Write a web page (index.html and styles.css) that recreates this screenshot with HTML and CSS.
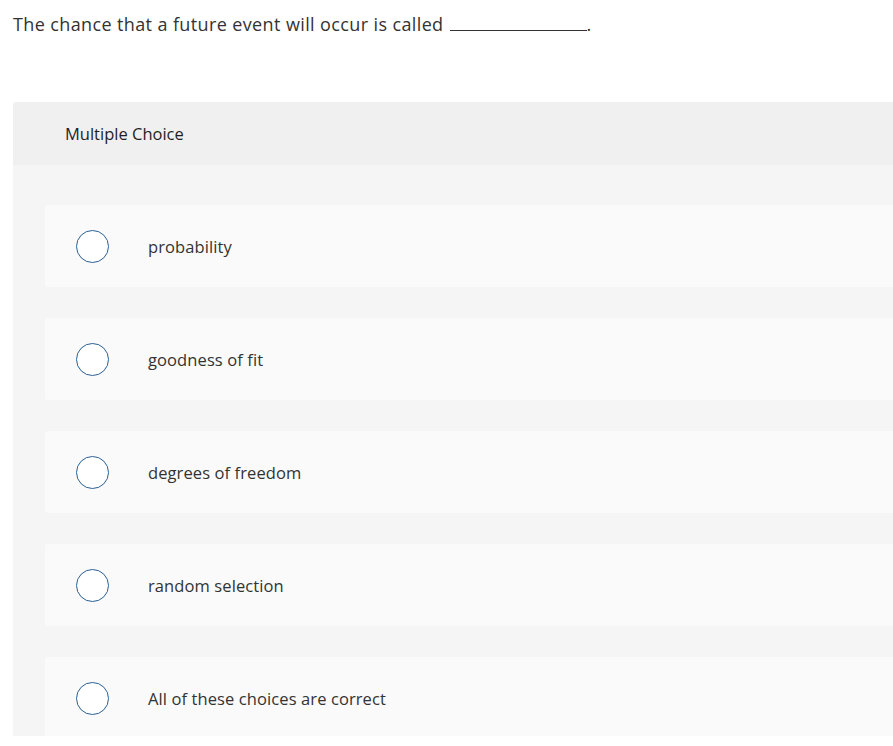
FILE: index.html
```html
<!DOCTYPE html>
<html>
<head>
<meta charset="utf-8">
<link rel="stylesheet" href="styles.css">
</head>
<body>
<div class="page">
  <p class="question">The chance that a future event will occur is called <span class="blank"></span>.</p>
  <section class="panel">
    <header class="panel-head">Multiple Choice</header>
    <div class="panel-body">
      <label class="choice"><span class="radio"></span><span class="label">probability</span></label>
      <label class="choice"><span class="radio"></span><span class="label">goodness of fit</span></label>
      <label class="choice"><span class="radio"></span><span class="label">degrees of freedom</span></label>
      <label class="choice"><span class="radio"></span><span class="label">random selection</span></label>
      <label class="choice"><span class="radio"></span><span class="label">All of these choices are correct</span></label>
    </div>
  </section>
</div>
</body>
</html>
```
FILE: styles.css
```css
html, body {
  margin: 0;
  padding: 0;
  background: #ffffff;
  overflow: hidden;
}
.page {
  height: 736px;
  overflow: hidden;
  font-family: "Open Sans", Lato, "Liberation Sans", sans-serif;
  color: #333333;
}
.question {
  margin: 0;
  padding: 12px 0 0 13px;
  height: 102px;
  box-sizing: border-box;
  font-size: 18px;
  letter-spacing: 0.38px;
  line-height: 25px;
  color: #333333;
}
.blank {
  display: inline-block;
  width: 137px;
  margin-left: 1px;
  border-bottom: 1px solid #333333;
  vertical-align: baseline;
}
.panel {
  margin-left: 13px;
  width: 1000px;
  border-radius: 3px 0 0 0;
  overflow: hidden;
}
.panel-head {
  background: #f0f0f0;
  height: 63px;
  padding-left: 52px;
  display: flex;
  align-items: center;
  font-size: 16.5px;
  color: #1f1f1f;
}
.panel-body {
  background: #f5f5f5;
  padding: 40px 0 40px 32px;
  display: flex;
  flex-direction: column;
  gap: 31px;
}
.choice {
  background: #fafafa;
  border-radius: 3px 0 0 3px;
  height: 82px;
  display: flex;
  align-items: center;
  padding-left: 31px;
}
.radio {
  width: 31px;
  height: 31px;
  border: 1.5px solid #2a5f94;
  border-radius: 50%;
  background: #ffffff;
  flex: none;
}
.label {
  margin-left: 39px;
  font-size: 16.5px;
  letter-spacing: 0.1px;
  color: #333333;
}
```
